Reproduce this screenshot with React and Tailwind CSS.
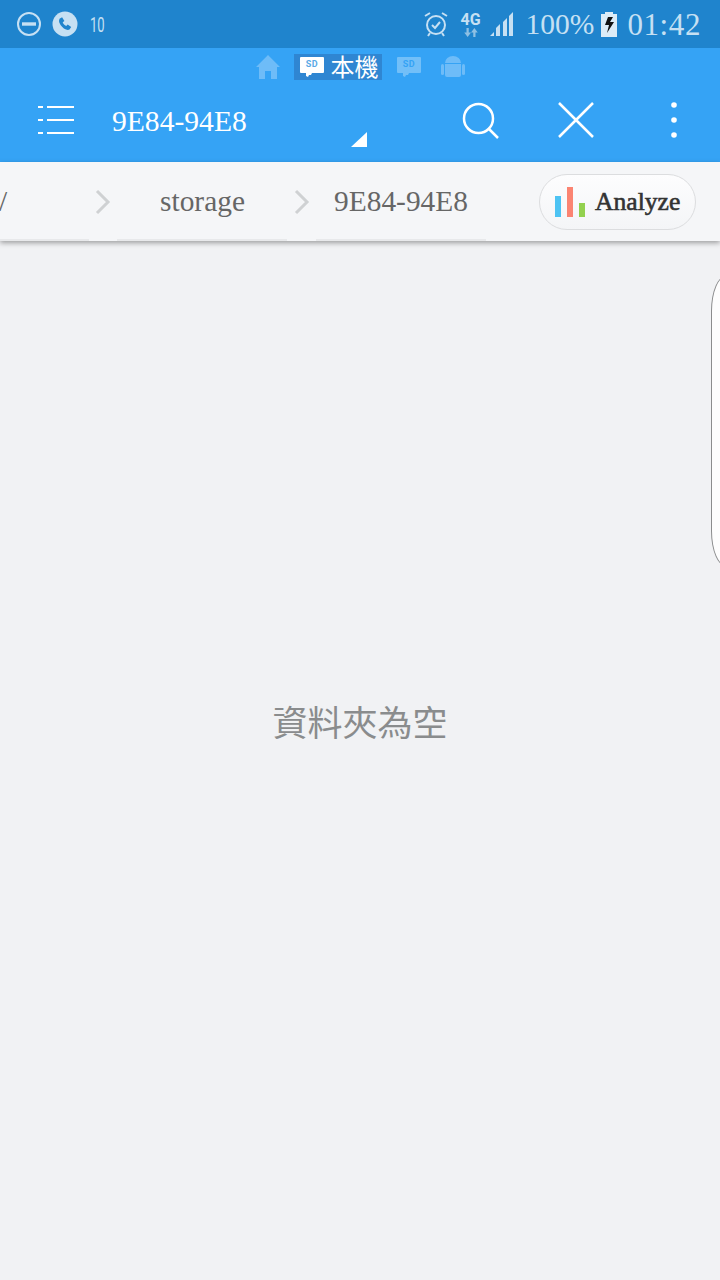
const serif = "font-['Liberation_Serif','Noto_Sans_CJK_TC',serif]";

function SdCard({ className, fill, label, opacity }) {
    return (
        <svg className={className} width="24" height="21" viewBox="0 0 24 21" opacity={opacity}>
            <path d="M1 0h22a1 1 0 011 1v14a1 1 0 01-1 1H12l-1 2-2 0-1 2-2-1V16H1a1 1 0 01-1-1V1a1 1 0 011-1z" fill={fill} />
            <text x="12" y="9.500" textAnchor="middle" fontFamily="Roboto, sans-serif" fontWeight="700" fontSize="9" letterSpacing="0.500" fill={label}>SD</text>
        </svg>
    );
}

function StatusBar() {
    return (
        <div className={`h-12 bg-[#1f84cd] flex items-center pl-4 pr-[19px] text-[#c6e0f3] ${serif}`}>
            <svg width="26" height="26" viewBox="0 0 26 26" fill="none" stroke="#c6e0f3">
                <circle cx="13" cy="13" r="11" strokeWidth="2" />
                <path d="M6 13h14" strokeWidth="3.400" />
            </svg>
            <svg className="ml-[10px]" width="26" height="26" viewBox="0 0 26 26">
                <circle cx="13" cy="13" r="12.500" fill="#c6e0f3" />
                <path d="M7.500 7.800l2.600-1.600 2.300 3.700-1.700 1.300c.6 1.700 1.800 3 3.500 3.800l1.500-1.500 3.500 2.600-1.700 2.400c-1 .7-2.300.6-3.500 0-3-1.300-5.300-3.700-6.600-6.800-.5-1.300-.5-2.700.1-3.800z" fill="#1f84cd" />
            </svg>
            <span className="ml-[12px] mt-[2px] w-[16px] font-['Roboto',sans-serif] text-[20px] leading-none scale-x-[0.65] origin-left">10</span>
            <div className="ml-auto flex items-center">
                <svg width="26" height="28" viewBox="0 0 26 28" fill="none" stroke="#c6e0f3" strokeWidth="2">
                    <circle cx="13" cy="15" r="9" />
                    <path d="M9 15l3 3 5-6" />
                    <path d="M2 6l5-3M24 6l-5-3M7 23l-2 3M19 23l2 3" />
                </svg>
                <div className="ml-[11px] w-[22px] flex flex-col items-center font-['Roboto',sans-serif] font-bold text-[16px] leading-[16px]">
                    4G
                    <svg width="16" height="9" viewBox="0 0 14 8" fill="#8fc0e3">
                        <path d="M1 4h2V0h2v4h2L4 8zM7 4l3-4 3 4h-2v4H9V4z" />
                    </svg>
                </div>
                <svg className="ml-[7px]" width="26" height="26" viewBox="0 0 26 26" fill="#c6e0f3">
                    <path d="M1 25l4-4v4zM7 25v-8l4-4v12zM14 25V11l4-4v18zM20 25V5l4-4v24z" />
                </svg>
                <span className="ml-[11px] mt-[2px] text-[29.500px] leading-none">100%</span>
                <svg className="ml-[7px]" width="16" height="25" viewBox="0 0 16 25">
                    <path d="M4 0h8v2h4v23H0V2h4z" fill="#dcecf7" />
                    <path d="M12 5H7L4 13h4l-2 8 7-11H9z" fill="#111" />
                </svg>
                <span className="ml-[10px] mt-[1px] text-[31px] leading-none tracking-[0.6px]">01:42</span>
            </div>
        </div>
    );
}

function TabStrip() {
    return (
        <div className="h-10 flex items-center justify-center pb-[2px]">
            <svg width="24" height="24" viewBox="0 0 24 24" fill="#6ebcf8">
                <path d="M12 0L0 12h3v12h6v-8h6v8h6V12h3z" />
            </svg>
            <div className="ml-[14px] h-[26px] w-[88px] bg-[#2f86d2] flex items-center pl-[6px]">
                <SdCard fill="#fff" label="#5aa9e6" />
                <span className={`ml-[7px] mt-[1px] text-white text-[24px] leading-none whitespace-nowrap ${serif}`}>本機</span>
            </div>
            <SdCard className="ml-[15px]" fill="#fff" label="#35a3f5" opacity="0.3" />
            <svg className="ml-[20px]" width="24" height="24" viewBox="0 0 24 24" fill="#6ebcf8">
                <path d="M4 8a8 7 0 0116 0zM4 9h16v11a2 2 0 01-2 2H6a2 2 0 01-2-2z" />
                <rect x="0" y="9" width="3" height="11" rx="1.500" />
                <rect x="21" y="9" width="3" height="11" rx="1.500" />
            </svg>
        </div>
    );
}

function ActionBar() {
    return (
        <div className="h-[74px] flex items-center relative">
            <svg className="ml-[38px] -mt-[10px]" width="36" height="30" viewBox="0 0 36 30" stroke="#fff" strokeWidth="2.200" fill="none">
                <path d="M0 2h5M9 2h27M0 15h5M9 15h27M0 28h5M9 28h27" />
            </svg>
            <span className={`ml-[38px] -mt-[6px] text-white text-[29.600px] leading-none ${serif}`}>9E84-94E8</span>
            <div className="ml-auto flex items-center -mt-[10px]">
                <svg width="37" height="37" viewBox="0 0 37 37" fill="none" stroke="#fff" strokeWidth="2.500">
                    <circle cx="16.500" cy="16.500" r="14.500" />
                    <path d="M27 27l9 9" />
                </svg>
                <svg className="ml-[59px]" width="36" height="36" viewBox="0 0 36 36" fill="none" stroke="#fff" strokeWidth="2.500">
                    <path d="M1 1l34 34M35 1L1 35" />
                </svg>
                <svg className="ml-[77px] mr-[43px]" width="6" height="36" viewBox="0 0 6 36" fill="#fff">
                    <circle cx="3" cy="3" r="2.800" />
                    <circle cx="3" cy="18" r="2.800" />
                    <circle cx="3" cy="33" r="2.800" />
                </svg>
            </div>
            {/* dropdown corner marker */}
            <svg className="absolute left-[351px] top-[44px]" width="16" height="16" viewBox="0 0 16 16" fill="#fff">
                <path d="M16 0v15H0z" />
            </svg>
        </div>
    );
}

function Chevron() {
    return (
        <svg className="shrink-0" width="16" height="26" viewBox="0 0 16 26" fill="none" stroke="#cfd1d3" strokeWidth="3">
            <path d="M2 2l11 11L2 24" />
        </svg>
    );
}

function Breadcrumb() {
    return (
        <div className="relative z-10 h-[79px] bg-[#f5f6f8] flex shadow-[0_2px_5px_rgba(0,0,0,0.35)]">
            <div className={`flex items-center text-[#666] text-[29.400px] leading-none ${serif}`}>
                <span className="w-[90px] h-full flex items-center pt-[3px] -ml-px border-b-2 border-[#e8e9eb]">/</span>
                <div className="w-[28px] flex justify-center"><Chevron /></div>
                <span className="w-[170px] h-full flex items-center justify-center pt-[3px] pl-px border-b-2 border-[#e8e9eb]">storage</span>
                <div className="w-[29px] flex justify-center"><Chevron /></div>
                <span className="w-[170px] h-full flex items-center justify-center pt-[3px] border-b-2 border-[#e8e9eb]">9E84-94E8</span>
            </div>
            <div className="absolute left-[539px] top-[12px] w-[157px] h-[56px] rounded-full border border-[#dcdddf] bg-gradient-to-b from-[#fdfdfe] to-[#f4f5f7] flex items-center pl-[15px]">
                <div className="flex items-end gap-[6px] h-[30px]">
                    <div className="w-[6px] h-[21px] bg-[#4dc3f3]" />
                    <div className="w-[6px] h-[30px] bg-[#fb8472]" />
                    <div className="w-[6px] h-[14px] bg-[#93d14f]" />
                </div>
                <span className={`ml-[10px] text-[#333] text-[25.600px] leading-none [-webkit-text-stroke:0.6px_#333] ${serif}`}>Analyze</span>
            </div>
        </div>
    );
}

export default function App() {
    return (
        <div className="relative w-[720px] h-[1280px] overflow-hidden bg-[#f1f2f4] flex flex-col">
            <StatusBar />
            <div className="bg-[#35a3f5]">
                <TabStrip />
                <ActionBar />
            </div>
            <Breadcrumb />
            <div className="flex-1 flex justify-center pt-[466px]">
                <span className={`text-[#8a8c8d] text-[35px] leading-none ${serif}`}>資料夾為空</span>
            </div>
            {/* side drawer handle */}
            <div className="absolute left-[711px] top-[275px] w-[40px] h-[292px] rounded-tl-[16px_36px] rounded-bl-[16px_36px] border border-[#8b8c8d] bg-[#fdfdfd]" />
        </div>
    );
}
